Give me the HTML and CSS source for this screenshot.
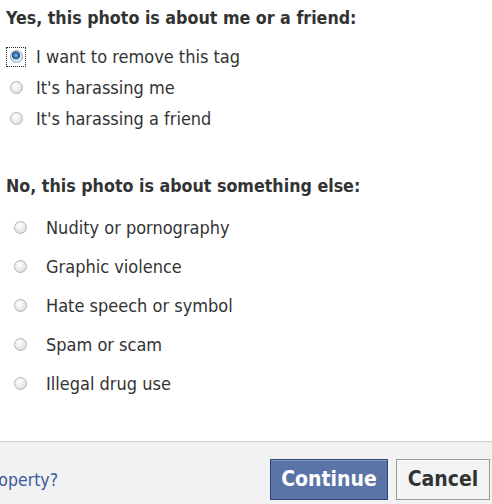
FILE: index.html
```html
<!DOCTYPE html>
<html>
<head>
<meta charset="utf-8">
<link rel="stylesheet" href="styles.css">
</head>
<body>
<div class="dialog">
  <div class="content">
    <h2 class="heading">Yes, this photo is about me or a friend:</h2>
    <ul class="options options-tight">
      <li class="option"><span class="focus"><span class="radio checked"></span></span><span class="label">I want to remove this tag</span></li>
      <li class="option"><span class="focus nofocus"><span class="radio"></span></span><span class="label">It's harassing me</span></li>
      <li class="option"><span class="focus nofocus"><span class="radio"></span></span><span class="label">It's harassing a friend</span></li>
    </ul>
    <h2 class="heading heading-second">No, this photo is about something else:</h2>
    <ul class="options options-wide">
      <li class="option"><span class="radio"></span><span class="label">Nudity or pornography</span></li>
      <li class="option"><span class="radio"></span><span class="label">Graphic violence</span></li>
      <li class="option"><span class="radio"></span><span class="label">Hate speech or symbol</span></li>
      <li class="option"><span class="radio"></span><span class="label">Spam or scam</span></li>
      <li class="option"><span class="radio"></span><span class="label">Illegal drug use</span></li>
    </ul>
  </div>
  <div class="footer">
    <div class="footer-left"><a class="link" href="#">Is this your intellectual property?</a></div>
    <div class="buttons">
      <button class="btn btn-primary">Continue</button>
      <button class="btn btn-secondary">Cancel</button>
    </div>
  </div>
</div>
</body>
</html>
```
FILE: styles.css
```css
html, body {
  margin: 0;
  padding: 0;
  background: #fff;
}
body {
  font-family: "DejaVu Sans Condensed", "DejaVu Sans", sans-serif;
  color: #333;
  width: 492px;
  height: 504px;
  overflow: hidden;
}
.dialog {
  display: flex;
  flex-direction: column;
  height: 504px;
}
.content {
  flex: 1;
  padding: 6px 0 0 6px;
}
.heading {
  margin: 0;
  font-size: 17.7px;
  font-weight: bold;
  line-height: 24px;
  color: #333;
}
.heading-second {
  margin-top: 40px;
}
.options {
  list-style: none;
  margin: 0;
  padding: 0;
}
.options-tight {
  margin-top: 11px;
}
.options-tight .option {
  height: 31px;
  gap: 10px;
}
.options-wide {
  margin-top: 10px;
  padding-left: 8px;
}
.options-wide .option {
  height: 39px;
  gap: 19px;
}
.option {
  display: flex;
  align-items: center;
  font-size: 18px;
}
.focus {
  display: flex;
  align-items: center;
  justify-content: center;
  width: 18px;
  height: 18px;
  border: 1px dotted #222;
}
.focus.nofocus {
  border-color: transparent;
}
.radio {
  display: inline-block;
  box-sizing: border-box;
  width: 13px;
  height: 13px;
  border-radius: 50%;
  border: 1px solid #b4b4b4;
  background: radial-gradient(circle at 40% 35%, #ffffff 0%, #f0f0f0 40%, #d4d4d4 100%);
  flex-shrink: 0;
}
.radio.checked {
  border-color: #8aa2bd;
  background: radial-gradient(circle at 45% 40%, #8fc3ea 0%, #2c6aa8 30%, #1d4f86 42%, #dce6f0 48%, #f4f7fa 100%);
}
.label {
  line-height: 20px;
}
.footer {
  height: 62px;
  border-top: 1px solid #ccc;
  background: #f2f2f2;
  display: flex;
  align-items: center;
  justify-content: space-between;
  padding-right: 2px;
}
.footer-left {
  width: 58px;
  overflow: hidden;
  display: flex;
  justify-content: flex-end;
  padding-top: 14px;
}
.link {
  white-space: nowrap;
  flex-shrink: 0;
  color: #3b5998;
  text-decoration: none;
  font-size: 17.5px;
}
.buttons {
  display: flex;
  gap: 8px;
  padding-top: 12px;
}
.btn {
  font-family: "DejaVu Sans Condensed", "DejaVu Sans", sans-serif;
  font-weight: bold;
  font-size: 21px;
  height: 41px;
  padding: 0 4px;
  cursor: pointer;
}
.btn-primary {
  background: #5b74a8;
  border: 1px solid #29447e;
  box-shadow: inset 0 1px 0 #8a9cc2;
  color: #fff;
  width: 118px;
}
.btn-secondary {
  background: #f4f4f4;
  border: 1px solid #999;
  box-shadow: inset 0 1px 0 #fff;
  color: #333;
  width: 94px;
}
```
